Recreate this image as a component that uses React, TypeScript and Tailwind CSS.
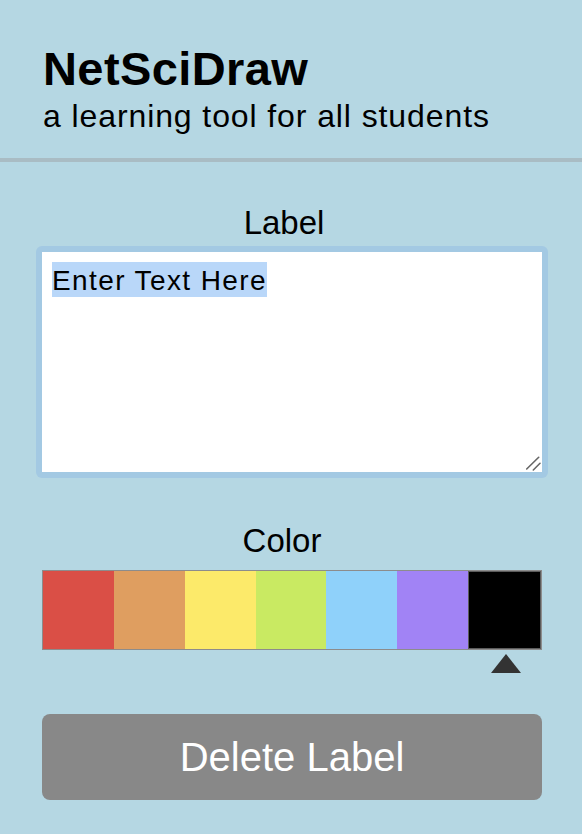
import React from 'react';

const swatches = ['#da4f46', '#df9e60', '#fcea6a', '#c9ea62', '#8fd1fa', '#a183f5', '#000000'];
const selected = 6;

export default function App() {
    return (
        <div className="min-h-[834px] w-full bg-[#b5d7e3] text-black font-['Liberation_Sans',Arial,sans-serif]">
            {/* Header */}
            <header className="pt-[45px] pl-[43px]">
                <h1 className="text-[47px] leading-[47px] font-bold tracking-[0.4px]">NetSciDraw</h1>
                <p className="mt-[8px] text-[32px] leading-[32px] tracking-[0.9px]">a learning tool for all students</p>
            </header>
            <div className="mt-[26px] h-[4px] bg-[#a9bcc4]" />

            <main className="pl-[42px] pr-[40px]">
                {/* Label editor */}
                <h2 className="mt-[44px] pr-[16px] text-center text-[33px] leading-[33px]">Label</h2>
                <div className="mt-[7px] -mx-[6px] rounded-[6px] bg-[#a3c9e3] p-[6px]">
                    <div className="relative h-[220px] bg-white pt-[10px] pl-[10px]">
                        <span className="inline-block h-[35px] bg-[#b9d7f9] pt-[2px] text-[28px] leading-[33px] tracking-[1.4px]">
                            Enter Text Here
                        </span>
                        <svg className="absolute right-0 bottom-0" width="16" height="16" viewBox="0 0 16 16">
                            <line x1="0.7" y1="13" x2="12.7" y2="1.3" stroke="#666" strokeWidth="1.6" strokeLinecap="round" />
                            <line x1="7.3" y1="14" x2="14" y2="7.3" stroke="#666" strokeWidth="1.6" strokeLinecap="round" />
                        </svg>
                    </div>
                </div>

                {/* Color picker */}
                <h2 className="mt-[46px] pr-[20px] text-center text-[33px] leading-[33px]">Color</h2>
                <div className="mt-[13px] flex h-[80px] border border-[#8c8c8c]">
                    {swatches.map((c, i) => (
                        <div
                            key={c}
                            className={`flex-1 ${i === selected ? 'border border-[#5c5c5c]' : ''}`}
                            style={{ backgroundColor: c }}
                        />
                    ))}
                </div>
                <div className="mt-[4px] grid grid-cols-7">
                    {swatches.map((c, i) => (
                        <div key={c} className="flex justify-center">
                            {i === selected && (
                                <div className="h-0 w-0 border-l-[15px] border-r-[15px] border-b-[19px] border-l-transparent border-r-transparent border-b-[#333333]" />
                            )}
                        </div>
                    ))}
                </div>

                <button className="mt-[41px] flex h-[86px] w-full items-center justify-center rounded-[8px] bg-[#888888] text-[40px] leading-[40px] text-white">
                    Delete Label
                </button>
            </main>
        </div>
    );
}
